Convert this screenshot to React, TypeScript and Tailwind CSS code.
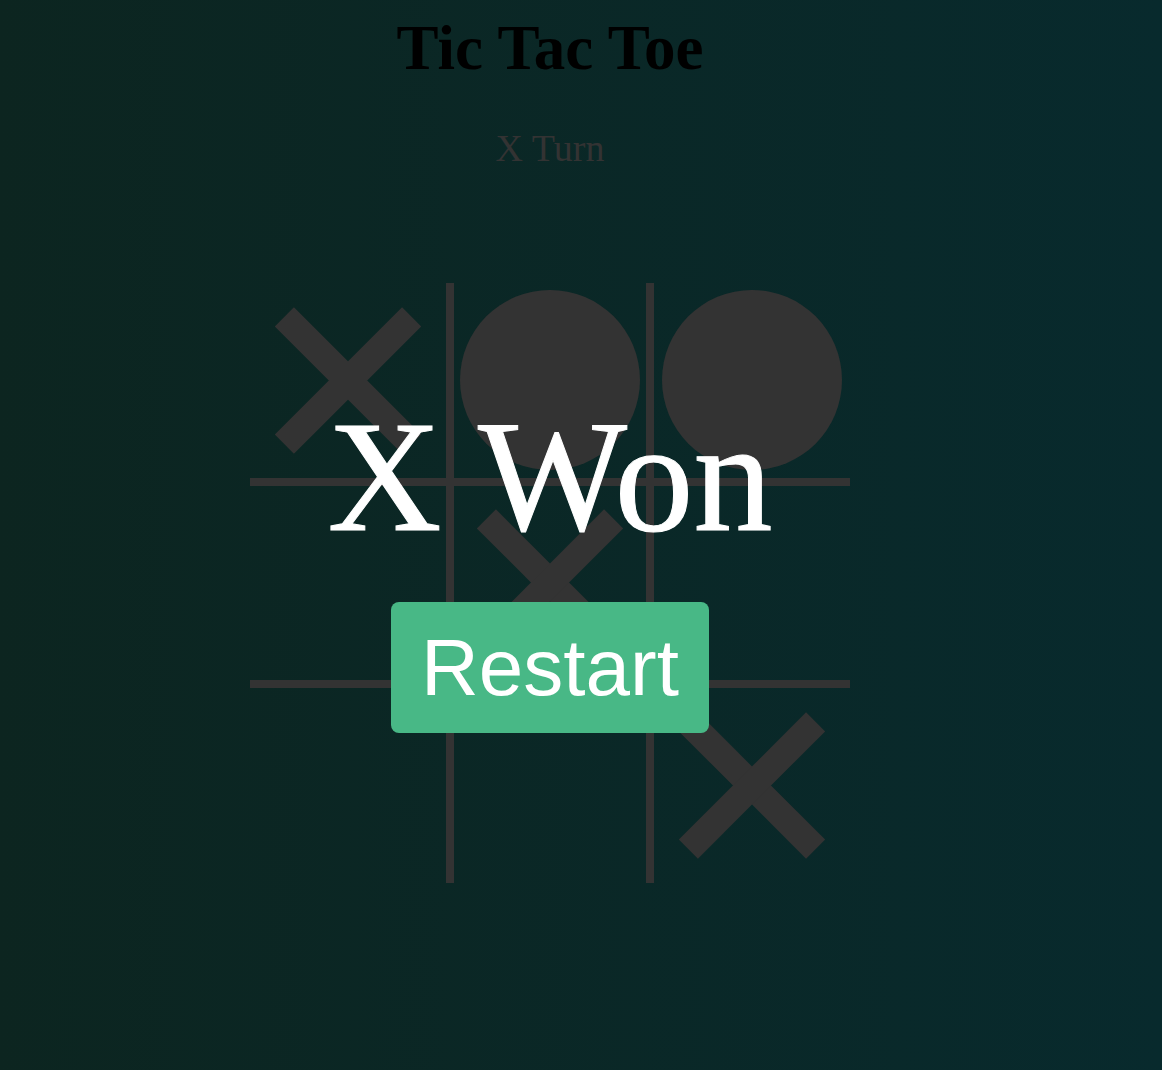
type Mark = "X" | "O" | null

const board: Mark[] = ["X", "O", "O", null, "X", null, null, null, "X"]

// interior grid lines: 4px on each side of a shared edge
const cellBorders = [
  "border-r-4 border-b-4",
  "border-x-4 border-b-4",
  "border-l-4 border-b-4",
  "border-r-4 border-y-4",
  "border-4",
  "border-l-4 border-y-4",
  "border-r-4 border-t-4",
  "border-x-4 border-t-4",
  "border-l-4 border-t-4",
]

const Cross = () => (
  <div className="relative w-[180px] h-[180px]">
    <div className="absolute left-0 top-[76.5px] w-[180px] h-[27px] bg-[#333333] rotate-45" />
    <div className="absolute left-0 top-[76.5px] w-[180px] h-[27px] bg-[#333333] -rotate-45" />
  </div>
)

const Circle = () => <div className="w-[180px] h-[180px] rounded-full bg-[#333333]" />

const App = () => {
  const serif = { fontFamily: '"Liberation Serif", "Times New Roman", serif' }

  return (
    <div className="min-h-screen w-full bg-linear-to-r from-[#0c2520] to-[#082a2d]">
      <div className="w-[1100px] flex flex-col items-center" style={serif}>
        {/* Header */}
        <h1 className="mt-[17px] text-[63px] leading-none font-bold text-black">Tic Tac Toe</h1>
        <p className="mt-[49px] text-[38px] leading-none text-[#333333]">X Turn</p>

        {/* Board */}
        <div className="relative mt-[116px]">
          <div className="grid grid-cols-3 w-[600px] h-[600px]">
            {board.map((mark, i) => (
              <div
                key={i}
                className={`flex items-center justify-center border-[#333333] ${cellBorders[i]}`}
              >
                {mark === "X" && <Cross />}
                {mark === "O" && <Circle />}
              </div>
            ))}
          </div>

          {/* Winning message */}
          <div className="absolute inset-0 flex flex-col items-center pt-[115px]">
            <div className="text-[158px] leading-none text-white whitespace-nowrap [-webkit-text-stroke:1px_white]">
              X Won
            </div>
            <button
              className="mt-[46px] w-[318px] h-[131px] rounded-lg bg-[#48b886] text-white text-[80px] leading-none"
              style={{ fontFamily: '"Liberation Sans", Arial, sans-serif' }}
            >
              Restart
            </button>
          </div>
        </div>
      </div>
    </div>
  )
}

export default App
